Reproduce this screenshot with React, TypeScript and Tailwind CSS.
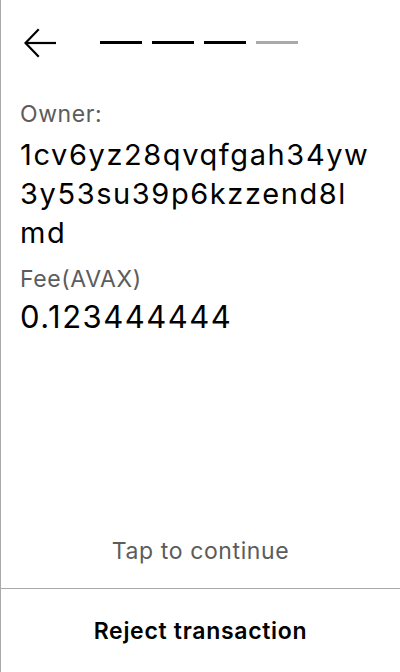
import React from 'react';

const steps = [true, true, true, false];
const ownerLines = ['1cv6yz28qvqfgah34yw', '3y53su39p6kzzend8l', 'md'];

export default function App() {
  return (
    <div
      className="flex h-[672px] w-[400px] flex-col overflow-hidden border-l border-[#aaaaaa] bg-white text-black"
      style={{ fontFamily: 'Inter, "Noto Sans", sans-serif' }}
    >
      <header className="flex h-[86px] items-center pl-[23px]">
        <svg width="34" height="30" viewBox="0 0 34 30" fill="none" stroke="black" strokeWidth="2.2" className="shrink-0">
          <path d="M14 2 L1.5 15 L14 28" strokeLinecap="square" />
          <path d="M1.5 15 H32" />
        </svg>
        <div className="mb-[2px] ml-[42px] flex gap-[10px]">
          {steps.map((done, i) => (
            <span key={i} className={`h-[3px] w-[42px] ${done ? 'bg-black' : 'bg-[#aaaaaa]'}`} />
          ))}
        </div>
      </header>

      <main className="flex flex-1 flex-col px-[19px] pt-[14px]">
        <p className="text-[23px] leading-[28px] tracking-[0.6px] text-[#5c5c5c]">Owner:</p>
        <p className="mt-[7px] text-[29px] leading-[39px] tracking-[1.6px]">
          {ownerLines.map((line) => (
            <span key={line} className="block">
              {line}
            </span>
          ))}
        </p>
        <p className="mt-[13px] text-[23px] leading-[28px] tracking-[0.6px] text-[#5c5c5c]">Fee(AVAX)</p>
        <p className="mt-[4px] text-[31px] leading-[39px] tracking-[1.5px]">0.123444444</p>

        <div className="mt-auto pb-[23px] text-center text-[23px] leading-[28px] tracking-[0.6px] text-[#5c5c5c]">
          Tap to continue
        </div>
      </main>

      <footer className="flex h-[84px] items-center justify-center border-t border-[#aaaaaa]">
        <span className="text-[23px] font-semibold leading-[28px] tracking-[0.7px]">Reject transaction</span>
      </footer>
    </div>
  );
}
